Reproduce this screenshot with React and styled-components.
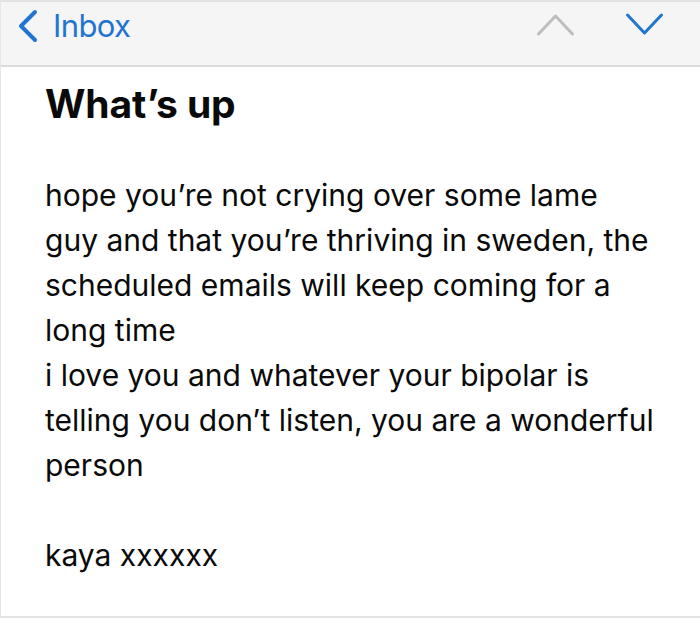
import React from "react";
import styled, { createGlobalStyle } from "styled-components";

const Global = createGlobalStyle`
  html, body { margin: 0; padding: 0; background: #fff; }
  body { font-family: Inter, "Noto Sans", sans-serif; -webkit-font-smoothing: antialiased; }
`;

const Screen = styled.div`
  width: 700px;
  height: 618px;
  box-sizing: border-box;
  border-left: 1px solid #e6e6e6;
  border-bottom: 2px solid #e4e4e4;
  background: #fff;
  display: flex;
  flex-direction: column;
  overflow: hidden;
`;

const Toolbar = styled.div`
  height: 67px;
  box-sizing: border-box;
  background: #f5f5f5;
  border-top: 2px solid #e2e2e2;
  border-bottom: 2px solid #dcdcdc;
  display: flex;
  align-items: center;
  justify-content: space-between;
  padding: 0 36px 0 16px;
`;

const Back = styled.div`
  display: flex;
  align-items: center;
  gap: 14px;
  color: #1f75cf;
  font-size: 31px;
  letter-spacing: -0.6px;
  margin-top: -16px;
`;

const Arrows = styled.div`
  display: flex;
  align-items: center;
  gap: 50px;
  margin-top: -18px;
`;

const Message = styled.div`
  padding: 12px 44px 0 44px;
  color: #0a0a0a;
`;

const Title = styled.h1`
  margin: 0;
  font-size: 39px;
  font-weight: 700;
  letter-spacing: -0.1px;
  line-height: 50px;
`;

const Body = styled.div`
  margin-top: 44px;
  font-size: 30px;
  line-height: 45px;
`;

const Paragraph = styled.p`
  margin: 0;
`;

const Spacer = styled.div`
  height: 45px;
`;

const Chevron = ({ dir, color }) => {
  const d = dir === "up" ? "M2 22 L19 4 L36 22" : "M2 3 L19 21 L36 3";
  return (
    <svg width="39" height="25" viewBox="0 0 38 25">
      <path d={d} fill="none" stroke={color} strokeWidth="3" strokeLinecap="round" strokeLinejoin="round" />
    </svg>
  );
};

export default function App() {
  return (
    <>
      <Global />
      <Screen>
        <Toolbar>
          <Back>
            <svg width="22" height="34" viewBox="0 0 22 34">
              <path d="M18 3 L4 17 L18 31" fill="none" stroke="#1f75cf" strokeWidth="4" strokeLinecap="round" strokeLinejoin="round" />
            </svg>
            <span>Inbox</span>
          </Back>
          <Arrows>
            <Chevron dir="up" color="#bdbdbd" />
            <Chevron dir="down" color="#1f75cf" />
          </Arrows>
        </Toolbar>
        <Message>
          <Title>What’s up</Title>
          <Body>
            <Paragraph>
              hope you’re not crying over some lame
              <br />
              guy and that you’re thriving in sweden, the
              <br />
              scheduled emails will keep coming for a
              <br />
              long time
              <br />
              i love you and whatever your bipolar is
              <br />
              telling you don’t listen, you are a wonderful
              <br />
              person
            </Paragraph>
            <Spacer />
            <Paragraph>kaya xxxxxx</Paragraph>
          </Body>
        </Message>
      </Screen>
    </>
  );
}
